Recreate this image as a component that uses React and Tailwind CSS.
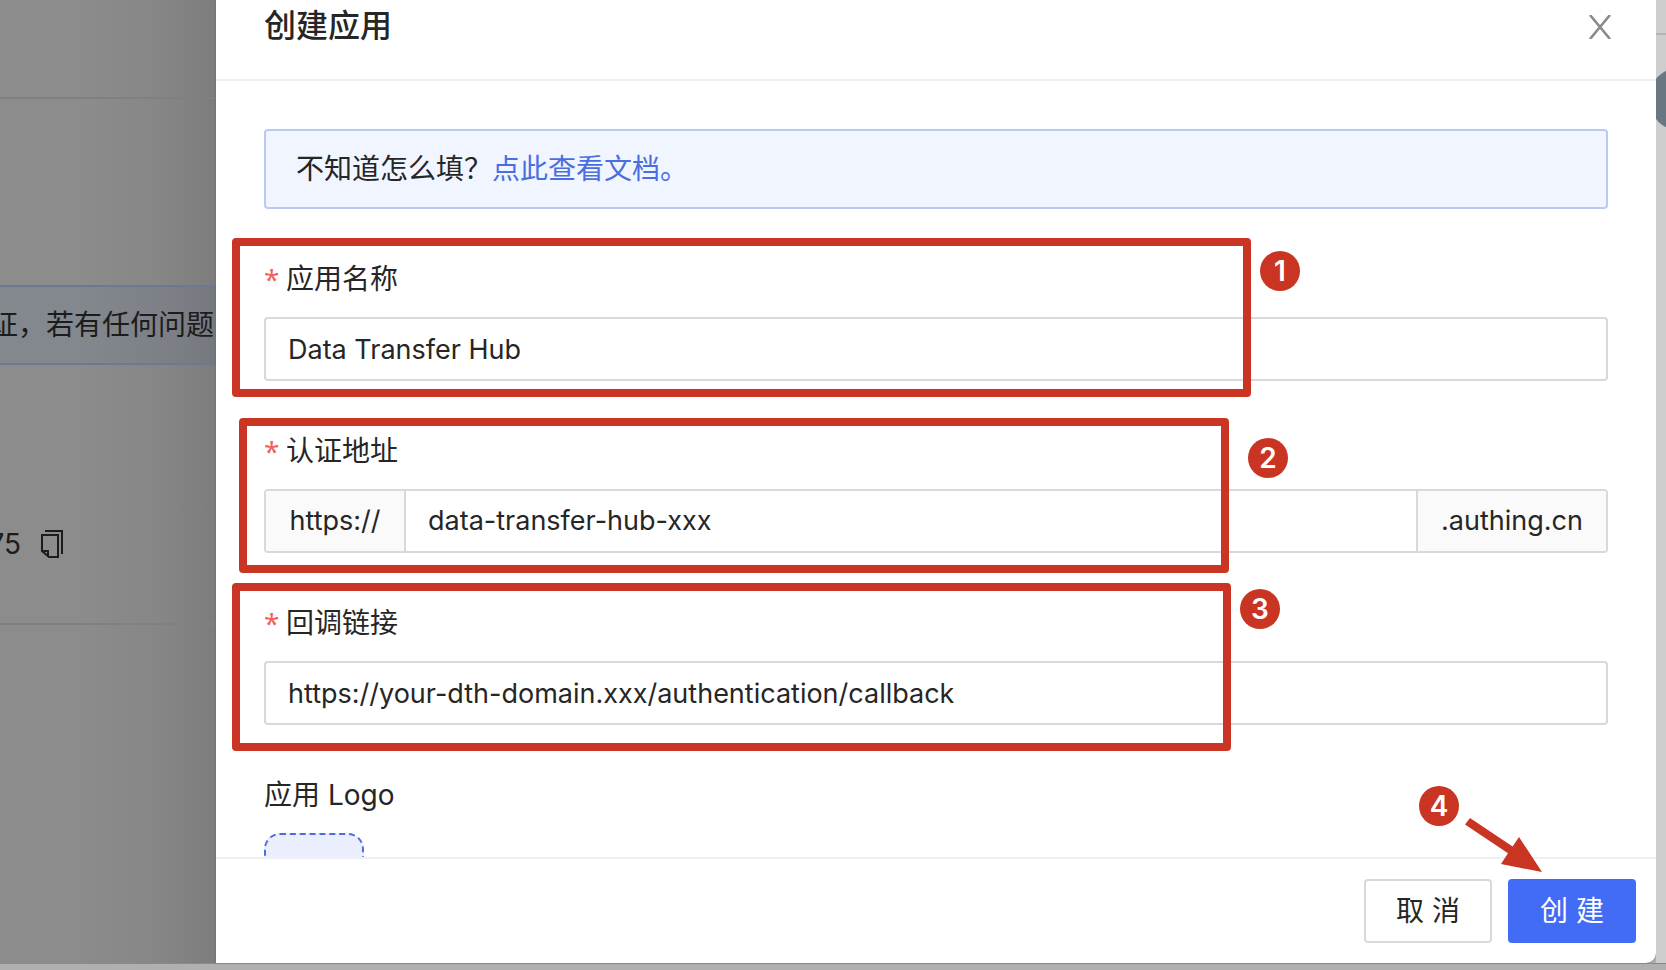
import React from "react";

function Field({ id, label, required, children }) {
  return (
    <div className="relative mb-12">
      <label htmlFor={id} className="mb-4 flex h-11 items-center gap-2">
        {required && (
          <span className="h-11 w-[14px] text-center font-['Noto_Sans'] text-[28px] leading-[44px] text-[#f0605d]">
            *
          </span>
        )}
        <span>{label}</span>
      </label>
      {children}
    </div>
  );
}

function Badge({ className, children }) {
  return (
    <span
      className={
        "absolute flex h-10 w-10 items-center justify-center rounded-full bg-[#c93423] text-[28px] font-semibold leading-none text-white " +
        className
      }
    >
      {children}
    </span>
  );
}

function Highlight({ className }) {
  return (
    <div
      className={
        "pointer-events-none absolute rounded-[4px] border-8 border-[#c93423] " + className
      }
    />
  );
}

const inputClass =
  "h-16 w-full min-w-0 rounded-[4px] border-2 border-[#d9d9d9] bg-white px-[22px] text-[27px] outline-none";

export default function App() {
  return (
    <div
      lang="zh-CN"
      className="relative flex h-screen flex-col overflow-hidden bg-[#b0b0b0] font-['Inter','Noto_Sans_CJK_SC',sans-serif] text-[28px] leading-[44px] text-[#262626]"
    >
      <div className="flex min-h-0 flex-1">
        <div className="flex w-[216px] shrink-0 flex-col overflow-hidden bg-[linear-gradient(to_right,#8c8c8c_35%,#868686_75%,#7c7c7c)] text-[#1c1c1c]">
          <div className="h-[99px] shrink-0 border-b-2 border-[#808080]" />
          <div className="mt-[186px] flex h-20 shrink-0 items-center justify-end whitespace-nowrap border-y-2 border-[#6b7991] bg-[linear-gradient(to_right,#83878e_35%,#7d8187_75%,#75787e)] pr-[2px]">
            证，若有任何问题
          </div>
          <div className="flex h-[260px] shrink-0 items-center justify-end gap-5 border-b-2 border-[#808080] pr-[153px] pt-[100px]">
            <span>75</span>
            <button type="button" aria-label="复制" className="shrink-0">
              <svg width="22" height="28" viewBox="0 0 22 28" fill="none" stroke="#1c1c1c" strokeWidth="2">
                <path d="M4 1h17v23" />
                <path d="M1 5h16v22H8l-7-6z" />
                <path d="M1 21h6v6" />
              </svg>
            </button>
          </div>
        </div>

        <section
          role="dialog"
          aria-labelledby="drawer-title"
          className="flex min-w-0 flex-1 flex-col rounded-br-[10px] bg-white shadow-[0_0_2px_#666]"
        >
          <header className="flex shrink-0 items-start justify-between border-b-2 border-[#f0f0f0] pb-[31px] pl-12 pr-11 pt-1">
            <h1 id="drawer-title" className="text-[32px] font-medium leading-[44px]">
              创建应用
            </h1>
            <button type="button" aria-label="关闭" className="mt-[11px]">
              <svg width="24" height="24" viewBox="0 0 24 24" fill="none" stroke="#8a8a8a" strokeWidth="2.6">
                <path d="M2 0l20 24M22 0L2 24" />
              </svg>
            </button>
          </header>

          <div className="min-h-0 flex-1 overflow-hidden px-12 pt-12">
            <div className="mb-12 flex h-20 items-center rounded-[4px] border-2 border-[#b8c9f2] bg-[#f0f5ff] px-[30px]">
              <span>不知道怎么填？</span>
              <a href="#docs" className="text-[#4a6ee0]">
                点此查看文档。
              </a>
            </div>

            <Field id="app-name" label="应用名称" required>
              <input id="app-name" className={inputClass} defaultValue="Data Transfer Hub" />
              <Highlight className="-left-8 right-[357px] -top-[19px] -bottom-4" />
              <Badge className="right-[308px] -top-[6px]">1</Badge>
            </Field>

            <Field id="app-domain" label="认证地址" required>
              <div className="flex h-16 overflow-hidden rounded-[4px] border-2 border-[#d9d9d9] text-[27px]">
                <span className="flex w-[140px] shrink-0 items-center justify-center border-r-2 border-[#d9d9d9] bg-[#fafafa]">
                  https://
                </span>
                <input
                  id="app-domain"
                  className="min-w-0 flex-1 bg-white px-[22px] outline-none"
                  defaultValue="data-transfer-hub-xxx"
                />
                <span className="flex w-[190px] shrink-0 items-center justify-center border-l-2 border-[#d9d9d9] bg-[#fafafa]">
                  .authing.cn
                </span>
              </div>
              <Highlight className="-left-[25px] right-[379px] -top-[11px] -bottom-5" />
              <Badge className="right-[320px] top-[9px]">2</Badge>
            </Field>

            <Field id="app-callback" label="回调链接" required>
              <input
                id="app-callback"
                className={inputClass}
                defaultValue="https://your-dth-domain.xxx/authentication/callback"
              />
              <Highlight className="-left-8 right-[377px] -top-[18px] -bottom-[26px]" />
              <Badge className="right-[328px] -top-3">3</Badge>
            </Field>

            <Field id="app-logo" label="应用 Logo">
              <button
                id="app-logo"
                type="button"
                aria-label="上传 Logo"
                className="block h-[100px] w-[100px] rounded-2xl border-2 border-dashed border-[#4a6ee0] bg-[#ebeffd]"
              />
            </Field>
          </div>

          <footer className="relative flex shrink-0 justify-end gap-4 border-t-2 border-[#f0f0f0] p-5">
            <button type="button" className="h-16 w-32 rounded-[4px] border-2 border-[#d9d9d9] bg-white">
              取 消
            </button>
            <button type="button" className="h-16 w-32 rounded-[4px] bg-[#436cf6] text-white">
              创 建
            </button>
            <Badge className="right-[197px] -top-[73px]">4</Badge>
            <svg
              className="pointer-events-none absolute right-[114px] -top-[43px]"
              width="80"
              height="58"
              viewBox="0 0 80 58"
              fill="#c93423"
            >
              <path d="M8 2L50.600 30.600L57 21L80 56L39 48L46 37.300L3 8.600z" />
            </svg>
          </footer>
        </section>

        <div className="relative w-[10px] shrink-0 overflow-hidden bg-[#cdcdcd]">
          <div className="h-[35px] border-b-2 border-[#b4b4b4]" />
          <div className="absolute -left-[7px] top-[67px] h-16 w-16 rounded-full bg-[#687782]" />
        </div>
      </div>
      <div className="h-[7px] shrink-0 border-t border-[#8a8a8a]" />
    </div>
  );
}
